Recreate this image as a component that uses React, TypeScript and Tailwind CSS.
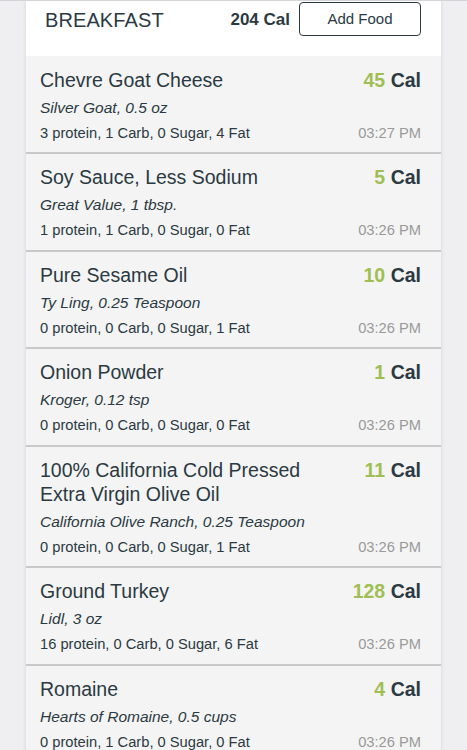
const FOODS = [
  { name: 'Chevre Goat Cheese', brand: 'Silver Goat, 0.5 oz', macros: '3 protein, 1 Carb, 0 Sugar, 4 Fat', cal: 45, time: '03:27 PM' },
  { name: 'Soy Sauce, Less Sodium', brand: 'Great Value, 1 tbsp.', macros: '1 protein, 1 Carb, 0 Sugar, 0 Fat', cal: 5, time: '03:26 PM' },
  { name: 'Pure Sesame Oil', brand: 'Ty Ling, 0.25 Teaspoon', macros: '0 protein, 0 Carb, 0 Sugar, 1 Fat', cal: 10, time: '03:26 PM' },
  { name: 'Onion Powder', brand: 'Kroger, 0.12 tsp', macros: '0 protein, 0 Carb, 0 Sugar, 0 Fat', cal: 1, time: '03:26 PM' },
  { name: '100% California Cold Pressed Extra Virgin Olive Oil', brand: 'California Olive Ranch, 0.25 Teaspoon', macros: '0 protein, 0 Carb, 0 Sugar, 1 Fat', cal: 11, time: '03:26 PM' },
  { name: 'Ground Turkey', brand: 'Lidl, 3 oz', macros: '16 protein, 0 Carb, 0 Sugar, 6 Fat', cal: 128, time: '03:26 PM' },
  { name: 'Romaine', brand: 'Hearts of Romaine, 0.5 cups', macros: '0 protein, 1 Carb, 0 Sugar, 0 Fat', cal: 4, time: '03:26 PM' },
]

export default function App() {
  return (
    <div className="h-[750px] overflow-hidden bg-[#efeff2] border-t border-[#d4d4d8] font-['Liberation_Sans',Arial,sans-serif] text-[#2b3a42]">
      <div className="ml-[26px] w-[415px] bg-[#f4f4f4] shadow-[0_0_4px_rgba(0,0,0,0.12)]">
        {/* Meal header */}
        <div className="h-[55px] bg-white flex items-start pl-[19px] pr-[20px] pt-[1px]">
          <span className="text-[20px] leading-[36px] tracking-[0.1px]">BREAKFAST</span>
          <span className="ml-auto text-[17px] leading-[36px] font-bold">204 Cal</span>
          <button className="ml-[9px] w-[122px] h-[34px] border border-[#2b3a42] rounded-[4px] text-[15px] bg-white">
            Add Food
          </button>
        </div>

        {/* Food rows */}
        {FOODS.map((f, i) => (
          <div
            key={f.name}
            className={`${i === 0 ? 'pt-[12px] pb-[8px]' : 'border-t-2 border-[#c9c9cb] pt-[11px] pb-[8.5px]'} pl-[14px] pr-[20px]`}
          >
            <div className="flex items-start">
              <p className="flex-1 text-[19.5px] leading-[24px] pr-4">{f.name}</p>
              <p className="text-[19.5px] leading-[24px] whitespace-nowrap">
                <span className="text-[#9fbf53] font-semibold">{f.cal}</span>{' '}
                <span className="font-bold">Cal</span>
              </p>
            </div>
            <p className="mt-[4px] text-[15.5px] leading-[24px] italic">{f.brand}</p>
            <div className="mt-[2px] flex items-center text-[14.7px] leading-[22px]">
              <span>{f.macros}</span>
              <span className="ml-auto text-[#9a9a9a]">{f.time}</span>
            </div>
          </div>
        ))}
      </div>
    </div>
  )
}
